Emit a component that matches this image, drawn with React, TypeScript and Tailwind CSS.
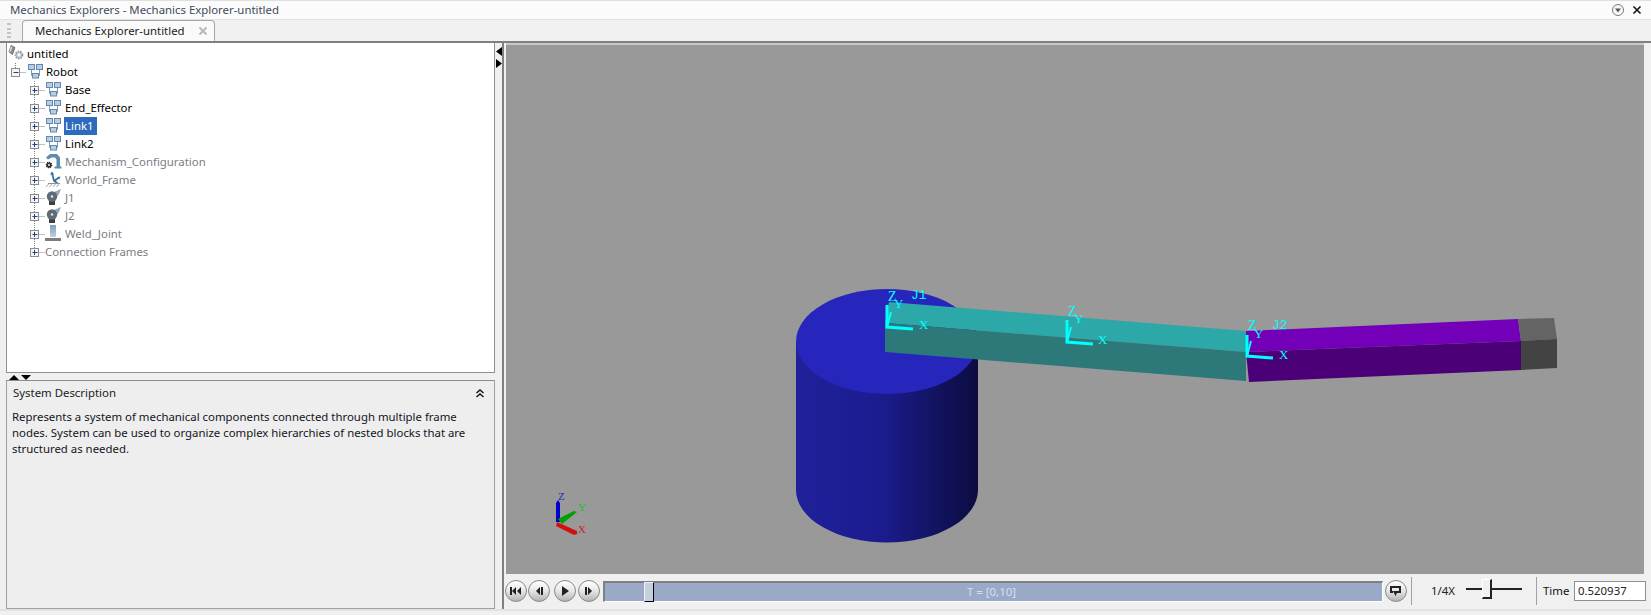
import type { ReactNode } from "react";

const FONT = "font-['Noto_Sans',sans-serif]";

function SubsystemIcon() {
  return (
    <svg width="16" height="16" viewBox="0 0 16 16" className="shrink-0">
      <path d="M4.5 7v5.5h2M12.5 7v5.5h-2" fill="none" stroke="#7f9cb8" />
      <rect x="1.5" y="1.5" width="6" height="5" fill="#b6cde4" stroke="#6389ad" />
      <rect x="9.5" y="1.5" width="6" height="5" fill="#b6cde4" stroke="#6389ad" />
      <rect x="5.5" y="10.5" width="6" height="4.5" fill="#b6cde4" stroke="#6389ad" />
    </svg>
  );
}

function RootIcon() {
  return (
    <svg width="16" height="16" viewBox="0 0 16 16" className="shrink-0">
      <path d="M3 0.5l4 2-2.5 7-3.5-2.5z" fill="#858c94" stroke="#59616a" strokeWidth="0.7" />
      <path d="M3 1.5l1.3 0.7-2 5-0.8-0.6z" fill="#e4e8ec" />
      <circle cx="11" cy="10" r="3.4" fill="#cfd6dc" stroke="#8f99a3" strokeWidth="2" strokeDasharray="1.5 0.9" />
      <circle cx="11" cy="10" r="1.2" fill="#fff" />
    </svg>
  );
}

function ConfigIcon() {
  return (
    <svg width="17" height="16" viewBox="0 0 17 16" className="shrink-0">
      <path d="M1 4.5L5 1H12L15 4.5V13.5H16.5V15.5H9.5V13.5H11.5V6.5L10 4.5H6.5L3 6.5z" fill="#5f8bac" />
      <circle cx="4" cy="12" r="2.6" fill="#2e2e2e" stroke="#2e2e2e" strokeWidth="1.4" strokeDasharray="1.2 0.8" />
      <circle cx="4" cy="12" r="0.9" fill="#fff" />
    </svg>
  );
}

function WorldIcon() {
  return (
    <svg width="16" height="16" viewBox="0 0 16 16" className="shrink-0">
      <path d="M9 10L7 2M9 10L14 6.5M9 10L12.5 12" fill="none" stroke="#2f6f9f" strokeWidth="1.7" />
      <path d="M7 0.5L5 3.5H9zM15.5 5.5L12.5 6L14 8.5z" fill="#2f6f9f" />
      <path d="M3 12.5h12" stroke="#8c8c8c" />
      <path d="M1 16l3-3.5M4.5 16l3-3.5M8 16l3-3.5M11.5 16l3-3.5" fill="none" stroke="#a8a8a8" />
    </svg>
  );
}

function JointIcon() {
  return (
    <svg width="16" height="16" viewBox="0 0 16 16" className="shrink-0">
      <path d="M8 3.5L16 0L14 5L11 9z" fill="#8ea7bd" />
      <rect x="4" y="11" width="6" height="5" fill="#3e3e3e" />
      <circle cx="7" cy="7.5" r="5.2" fill="#5f6b75" />
      <circle cx="7" cy="7.5" r="1.3" fill="#dfe3e6" />
    </svg>
  );
}

function WeldIcon() {
  return (
    <svg width="16" height="16" viewBox="0 0 16 16" className="shrink-0">
      <defs>
        <linearGradient id="weld" x1="0" y1="0" x2="0" y2="1">
          <stop offset="0" stopColor="#7f9fb8" />
          <stop offset="1" stopColor="#c0d0dc" />
        </linearGradient>
      </defs>
      <rect x="5" y="0" width="6" height="12" fill="url(#weld)" />
      <rect x="0" y="13" width="16" height="3" fill="#7d7d7d" />
    </svg>
  );
}

// tree guide: vertical dots, expander box and the horizontal stub
function Guide({ last, root }: { last?: boolean; root?: boolean }) {
  const cx = root ? 8.5 : 27.5;
  return (
    <svg width="38" height="18" className="shrink-0">
      <line x1={cx} y1="0" x2={cx} y2={root || last ? 9 : 18} stroke="#808080" strokeDasharray="1 1" />
      <line x1={cx + 5} y1="9.5" x2={cx + 10} y2="9.5" stroke="#808080" strokeDasharray="1 1" />
      <rect x={cx - 4} y="5.5" width="8" height="8" fill="#f4f4f4" stroke="#8c8c8c" />
      <line x1={cx - 2} y1="9.5" x2={cx + 3} y2="9.5" stroke="#24408a" />
      {!root && <line x1={cx} y1="7" x2={cx} y2="12" stroke="#24408a" />}
    </svg>
  );
}

const rows = [
  { label: "Base", Icon: SubsystemIcon },
  { label: "End_Effector", Icon: SubsystemIcon },
  { label: "Link1", Icon: SubsystemIcon, selected: true },
  { label: "Link2", Icon: SubsystemIcon },
  { label: "Mechanism_Configuration", Icon: ConfigIcon, dim: true },
  { label: "World_Frame", Icon: WorldIcon, dim: true },
  { label: "J1", Icon: JointIcon, dim: true },
  { label: "J2", Icon: JointIcon, dim: true },
  { label: "Weld_Joint", Icon: WeldIcon, dim: true },
];

function Tree() {
  return (
    <div className="h-[330px] bg-white border border-[#8f8f8f] border-t-0 text-[11.4px] text-black overflow-hidden pt-[2px]">
      <div className="h-[18px] flex items-center pl-[1px] gap-[3px]">
        <div className="-mt-[2px]">
          <RootIcon />
        </div>
        <span>untitled</span>
      </div>
      <div className="h-[18px] flex items-center">
        <div className="w-[20px] overflow-hidden shrink-0">
          <Guide root />
        </div>
        <div className="-mt-[2px]">
          <SubsystemIcon />
        </div>
        <span className="ml-[3px]">Robot</span>
      </div>
      {rows.map((r) => (
        <div key={r.label} className="h-[18px] flex items-center">
          <Guide />
          <div className="w-[16px] shrink-0 -mt-[2px]">
            <r.Icon />
          </div>
          <span className={r.selected ? "ml-[3px] px-[1px] pr-[3px] bg-[#2f6bbd] text-white leading-[18px]" : r.dim ? "ml-[4px] text-[#7c7c84]" : "ml-[4px]"}>
            {r.label}
          </span>
        </div>
      ))}
      <div className="h-[18px] flex items-center">
        <Guide last />
        <span className="text-[#7c7c84]">Connection Frames</span>
      </div>
    </div>
  );
}

function Scene() {
  return (
    <svg viewBox="506 45 1138 529" className="w-full h-full block">
      <defs>
        <linearGradient id="cyl" x1="0" y1="0" x2="1" y2="0">
          <stop offset="0" stopColor="#20209a" />
          <stop offset="0.45" stopColor="#1c1c90" />
          <stop offset="1" stopColor="#0c0c40" />
        </linearGradient>
      </defs>
      <rect x="506" y="45" width="1138" height="529" fill="#999999" />
      {/* cylinder */}
      <path d="M796 341.5V490A91 52.5 0 0 0 978 490V341.5z" fill="url(#cyl)" />
      <ellipse cx="887" cy="341.5" rx="91" ry="52.5" fill="#2626bd" />
      {/* teal link */}
      <path d="M889 302L1246 331V352L885 323z" fill="#2ca8a8" />
      <path d="M885 323L1246 352V381L885 352z" fill="#2d7878" />
      {/* purple link */}
      <path d="M1246 331L1518 319L1521 341L1246 352z" fill="#7300b8" />
      <path d="M1246 352L1521 341V370L1249 382z" fill="#4b0078" />
      {/* end tip */}
      <path d="M1518 319L1554 318L1557 339L1521 341z" fill="#646464" />
      <path d="M1521 341L1557 339V368L1521 370z" fill="#434343" />
      {/* frames */}
      <g stroke="#00ffff" fill="none">
        <path d="M887 305V327L913 329" strokeWidth="3" />
        <path d="M887 327L891 312" strokeWidth="2" />
        <path d="M1067 320V342L1093 344" strokeWidth="3" />
        <path d="M1067 342L1071 327" strokeWidth="2" />
        <path d="M1247 335V356L1273 358" strokeWidth="3" />
        <path d="M1247 356L1251 341" strokeWidth="2" />
      </g>
      <g fill="#00ffff" fontFamily="'Liberation Serif', serif" fontSize="13">
        <text x="888" y="301" fontSize="14">Z</text>
        <text x="894" y="308">Y</text>
        <text x="919" y="329">X</text>
        <text x="911" y="299" fontFamily="'Liberation Mono', monospace">J1</text>
        <text x="1068" y="316" fontSize="14">Z</text>
        <text x="1074" y="323">Y</text>
        <text x="1098" y="344">X</text>
        <text x="1248" y="330" fontSize="14">Z</text>
        <text x="1254" y="338">Y</text>
        <text x="1279" y="359">X</text>
        <text x="1272" y="329" fontFamily="'Liberation Mono', monospace">J2</text>
      </g>
      {/* triad */}
      <path d="M556 522V503L558 500L560 503V522z" fill="#0000c8" />
      <path d="M558 519L574 511L577 512L562 524z" fill="#00a000" />
      <path d="M557 522L577 531V534L574 535L556 526z" fill="#d01010" />
      <g fontFamily="'Liberation Serif', serif" fontSize="11">
        <text x="558" y="500" fill="#2a2acc">Z</text>
        <text x="578" y="511" fill="#20c020">Y</text>
        <text x="578" y="533" fill="#d82020">X</text>
      </g>
    </svg>
  );
}

function RoundButton({ children }: { children: ReactNode }) {
  return (
    <button className="w-[22px] h-[22px] rounded-full border border-[#8a8a8a] bg-gradient-to-b from-white via-[#e6e6e6] to-[#b4b4b4] flex items-center justify-center shrink-0">
      <svg width="14" height="12" viewBox="0 0 14 12" fill="#222">
        {children}
      </svg>
    </button>
  );
}

function PlayBar() {
  return (
    <div className="h-[34px] flex items-center -ml-px text-[11.4px]">
      <RoundButton>
        <path d="M1 2h2v8H1zM7 2v8L3 6zM12 2v8L8 6z" />
      </RoundButton>
      <div className="ml-px">
        <RoundButton>
          <path d="M8 2v8L4 6zM9 2h2v8H9z" />
        </RoundButton>
      </div>
      <div className="ml-[4px]">
        <RoundButton>
          <path d="M4 1v10l7-5z" />
        </RoundButton>
      </div>
      <div className="ml-[2px]">
        <RoundButton>
          <path d="M3 2h2v8H3zM6 2v8l4-4z" />
        </RoundButton>
      </div>
      <div className="ml-[3px] w-[780px] h-[21px] pr-[4px] bg-[#9aa9c8] border-l-2 border-t-2 border-l-[#808080] border-t-[#808080] border-r border-b border-r-white border-b-white relative flex items-center justify-center text-[#d9dfea] shrink-0">
        T = [0,10]
        <div className="absolute left-[39px] -top-px w-[10px] h-[20px] bg-[#c5cfe0] border border-[#eef0f5] border-r-black border-b-black" />
      </div>
      <div className="ml-[2px]">
        <RoundButton>
          <path d="M1 1h11v7H8V6h2V3H3v3h1v2H1zM4 6h5l-2.5 5z" />
        </RoundButton>
      </div>
      <div className="ml-[4px] w-px h-[28px] bg-[#a0a0a0] shrink-0" />
      <span className="ml-[19px] w-[24px] text-[#222] shrink-0">1/4X</span>
      <div className="ml-[11px] mb-[4px] w-[56px] h-[2px] bg-[#222] relative shrink-0">
        <div className="absolute left-[16px] -top-[9px] w-[10px] h-[20px] bg-[#f0f0f0] border-r-2 border-b-2 border-[#222] border-t border-l border-t-white border-l-white" />
      </div>
      <div className="ml-[14px] w-px h-[28px] bg-[#a0a0a0] shrink-0" />
      <span className="ml-[6px] w-[31px] text-[#111] shrink-0">Time</span>
      <div className="w-[72px] h-[20px] border border-[#8f8f8f] bg-white px-[3px] flex items-center text-[#222] shrink-0">0.520937</div>
    </div>
  );
}

export default function App() {
  return (
    <div className={`w-[1651px] h-[615px] bg-[#f0f0f0] overflow-hidden flex flex-col ${FONT}`}>
      <div className="h-[20px] bg-[#fbfbfb] border-t border-[#e0e0e0] border-b border-b-[#e2e2e2] flex items-center justify-between pl-[10px] pr-[9px] text-[11.4px] text-[#3e4a5c]">
        <span>Mechanics Explorers - Mechanics Explorer-untitled</span>
        <div className="flex items-center gap-[8px]">
          <svg width="12" height="12" viewBox="0 0 12 12">
            <circle cx="6" cy="6" r="5.5" fill="none" stroke="#777" />
            <path d="M3 4.5h6L6 8.5z" fill="#555" />
          </svg>
          <svg width="10" height="10" viewBox="0 0 10 10">
            <path d="M1.5 1.5l7 7M8.5 1.5l-7 7" stroke="#111" strokeWidth="1.6" />
          </svg>
        </div>
      </div>
      <div className="h-[23px] flex items-end border-b-2 border-[#808080] pl-[7px] bg-[#f0f0f0]">
        <div className="w-[4px] h-[15px] mb-[3px] mr-[11px] border-x-2 border-dotted border-[#c4c4c4]" />
        <div className="w-[193px] h-[21px] rounded-t-[4px] bg-[#fafafa] border border-b-0 border-[#a8a8a8] flex items-center justify-between pl-[12px] pr-[6px] text-[11.4px] text-[#1a1a24]">
          <span>Mechanics Explorer-untitled</span>
          <svg width="10" height="10" viewBox="0 0 10 10">
            <path d="M1.5 1.5l7 7M8.5 1.5l-7 7" stroke="#b8b8b8" strokeWidth="2" />
          </svg>
        </div>
      </div>
      <div className="flex-1 flex min-h-0 pl-[6px] pr-[7px]">
        <div className="w-[489px] shrink-0 flex flex-col">
          <Tree />
          <div className="h-[7px] flex items-end pl-[3px] gap-[2px]">
            <svg width="10" height="5" viewBox="0 0 10 5"><path d="M0 5l5-5 5 5z" fill="#000" /></svg>
            <svg width="10" height="5" viewBox="0 0 10 5"><path d="M0 0l5 5 5-5z" fill="#000" /></svg>
          </div>
          <div className="flex-1 bg-[#eeeeee] border-t border-[#8c8c8c] border-r border-r-[#a0a0a0] border-l border-l-[#a0a0a0] border-b border-b-[#a0a0a0] text-[11.4px] text-[#14141c] px-[6px]">
            <div className="h-[24px] flex items-center justify-between pr-[3px]">
              <span className="text-[#222]">System Description</span>
              <svg width="10" height="10" viewBox="0 0 10 10" fill="none" stroke="#111" strokeWidth="1.4">
                <path d="M1.5 5l3.5-3 3.5 3M1.5 9l3.5-3 3.5 3" />
              </svg>
            </div>
            <p className="mt-[4px] -ml-px leading-[16px] whitespace-nowrap">
              Represents a system of mechanical components connected through multiple frame
              <br />
              nodes. System can be used to organize complex hierarchies of nested blocks that are
              <br />
              structured as needed.
            </p>
          </div>
        </div>
        <div className="w-[7px] shrink-0 flex flex-col items-center pt-[4px] gap-[3px]">
          <svg width="6" height="9" viewBox="0 0 6 9"><path d="M6 0v9L0 4.5z" fill="#000" /></svg>
          <svg width="6" height="9" viewBox="0 0 6 9"><path d="M0 0v9l6-4.5z" fill="#000" /></svg>
        </div>
        <div className="flex-1 flex flex-col min-w-0 border-l-2 border-[#808080] pl-[2px]">
          <div className="h-[531px] border-t-2 border-[#c8c8c8] shrink-0">
            <Scene />
          </div>
          <PlayBar />
        </div>
      </div>
      <div className="h-[6px] border-t-2 border-[#e2e2e2]" />
    </div>
  );
}
